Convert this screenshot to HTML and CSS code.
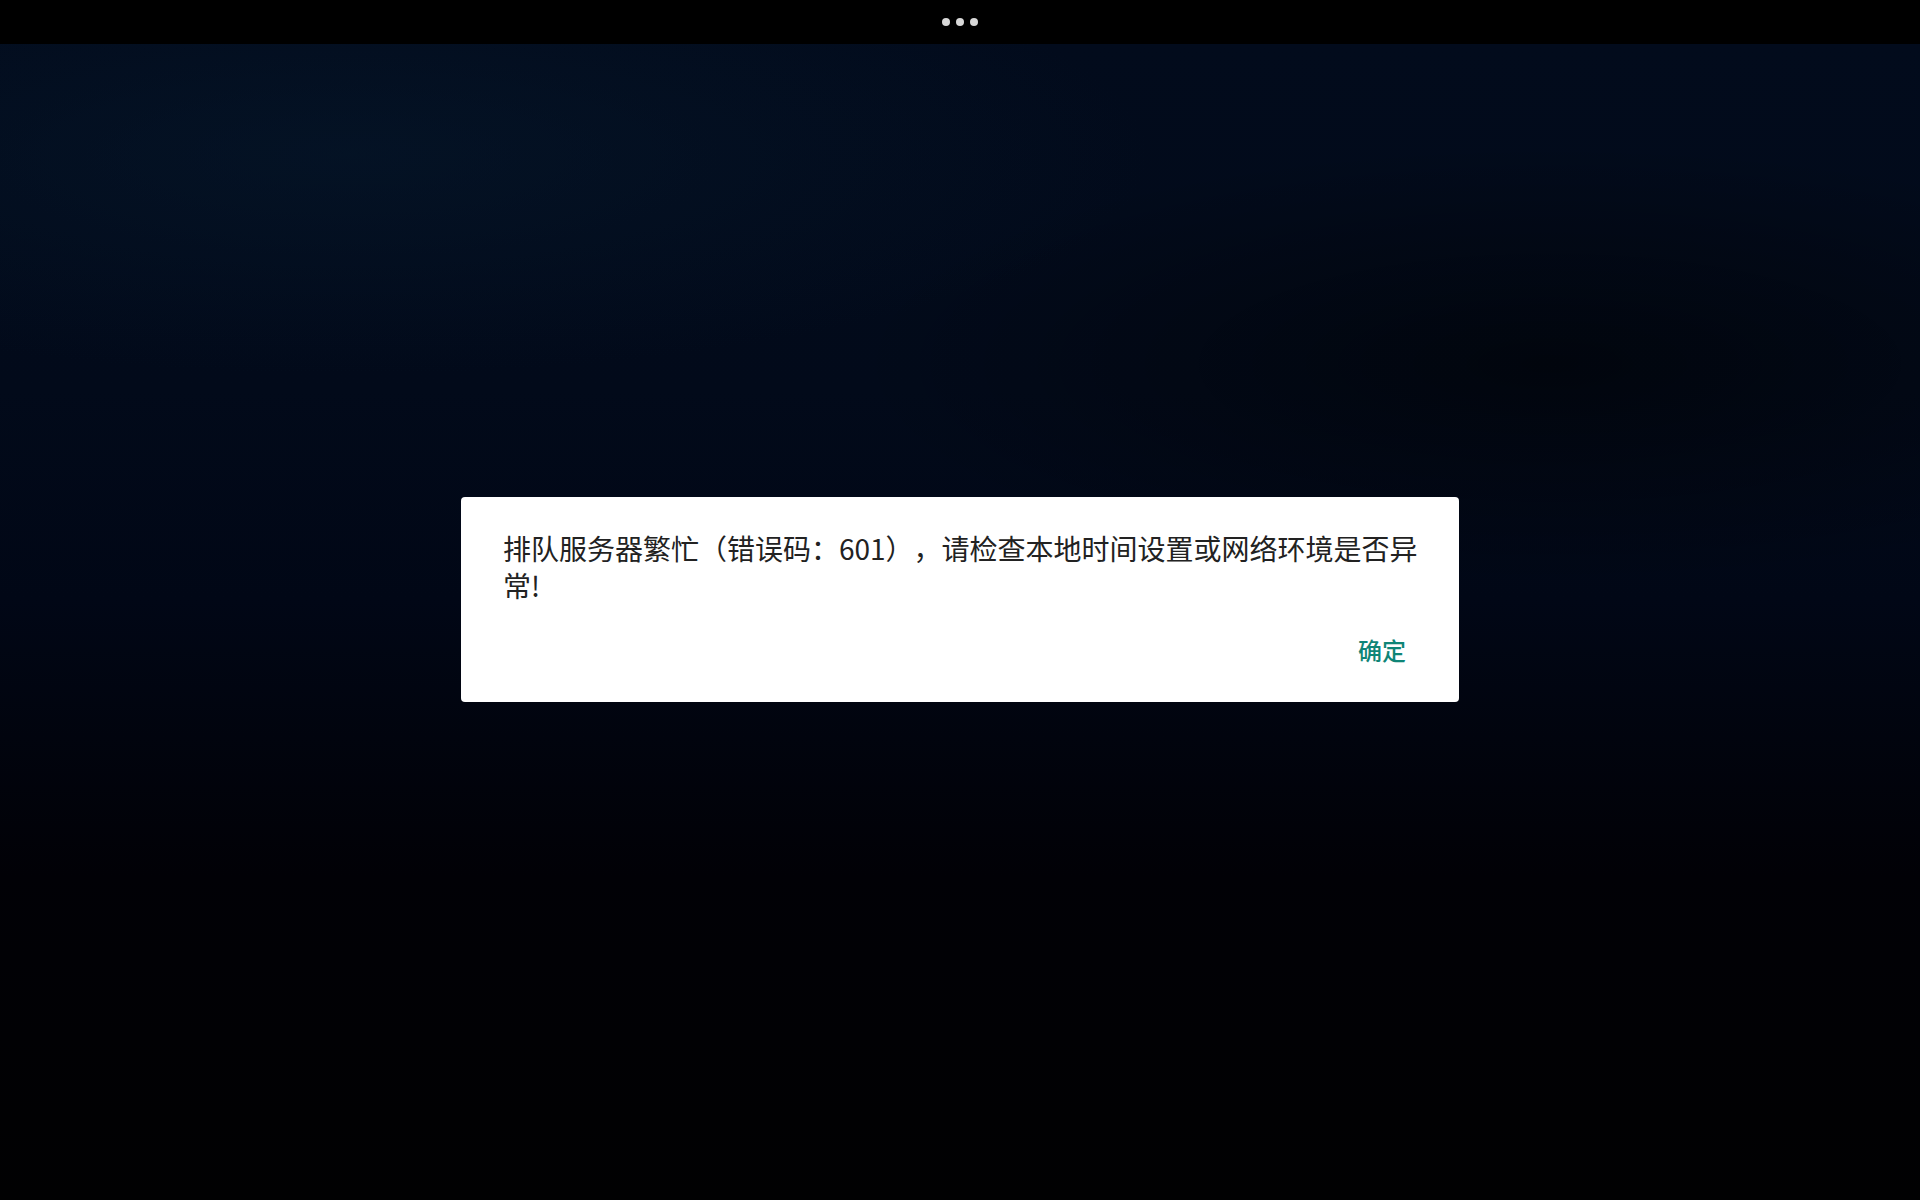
FILE: index.html
```html
<!DOCTYPE html>
<html lang="zh-CN">
<head>
    <meta charset="UTF-8">
    <meta name="viewport" content="width=device-width, initial-scale=1.0">
    <title>排队</title>
    <link rel="stylesheet" href="styles.css">
</head>
<body>
    <div class="top-bar">
        <span class="dot"></span>
        <span class="dot"></span>
        <span class="dot"></span>
    </div>
    <div class="screen">
        <div class="dialog">
            <p class="dialog-msg">排队服务器繁忙（错误码：601），请检查本地时间设置或网络环境是否异常!</p>
            <div class="dialog-actions">
                <button type="button" class="btn-ok">确定</button>
            </div>
        </div>
    </div>
</body>
</html>
```

FILE: styles.css
```css
html, body {
    height: 100%;
}
body {
    margin: 0;
    font-family: "Noto Sans CJK SC", "Noto Sans", sans-serif;
    background: #000;
    display: flex;
    flex-direction: column;
    overflow: hidden;
}
.top-bar {
    height: 44px;
    background: #000;
    display: flex;
    justify-content: center;
    align-items: center;
    gap: 6px;
    flex-shrink: 0;
}
.dot {
    width: 8px;
    height: 8px;
    border-radius: 50%;
    background: #d8d8d8;
}
.screen {
    flex: 1;
    display: flex;
    justify-content: center;
    padding-top: 453px;
    background:
        radial-gradient(ellipse 800px 220px at 350px 110px, rgba(6, 26, 46, 0.5), transparent),
        radial-gradient(ellipse 700px 220px at 1550px 320px, rgba(0, 0, 0, 0.5), transparent),
        linear-gradient(to bottom, #020b1c 0%, #020a1a 30%, #010716 48%, #01040e 60%, #010106 72%, #010102 100%);
}
.dialog {
    width: 998px;
    height: 205px;
    box-sizing: border-box;
    background: #fff;
    border-radius: 4px;
    padding: 33px 36px 0 42px;
}
.dialog-msg {
    margin: 0;
    font-size: 28px;
    line-height: 37px;
    color: #222;
    text-spacing-trim: space-all;
}
.dialog-actions {
    display: flex;
    justify-content: flex-end;
    margin-top: 30px;
    padding-right: 17px;
}
.btn-ok {
    font-family: inherit;
    font-size: 24px;
    line-height: 32px;
    font-weight: 500;
    color: #0f8577;
    background: none;
    border: none;
    padding: 0;
    cursor: pointer;
}
```
